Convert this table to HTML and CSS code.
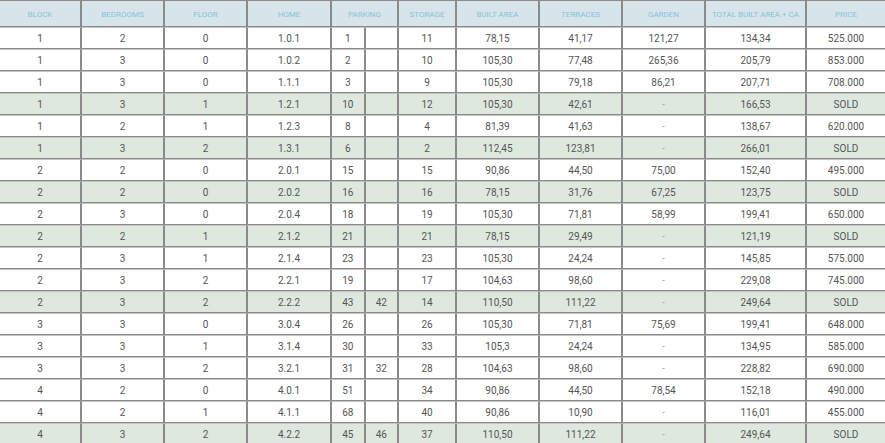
FILE: index.html
```html
<!DOCTYPE html>
<html>
<head>
<meta charset="utf-8">
<link rel="stylesheet" href="styles.css">
</head>
<body>
<table class="units">
<thead>
<tr>
<th class="c-block">BLOCK</th><th class="c-bed">BEDROOMS</th><th class="c-floor">FLOOR</th><th class="c-home">HOME</th><th class="c-park" colspan="2">PARKING</th><th class="c-stor">STORAGE</th><th class="c-built">BUILT AREA</th><th class="c-terr">TERRACES</th><th class="c-gard">GARDEN</th><th class="c-total">TOTAL BUILT AREA + CA</th><th class="c-price">PRICE</th>
</tr>
</thead>
<tbody>
<tr><td>1</td><td>2</td><td>0</td><td>1.0.1</td><td class="pa">1</td><td class="pb"></td><td>11</td><td>78,15</td><td>41,17</td><td>121,27</td><td>134,34</td><td>525.000</td></tr>
<tr><td>1</td><td>3</td><td>0</td><td>1.0.2</td><td class="pa">2</td><td class="pb"></td><td>10</td><td>105,30</td><td>77,48</td><td>265,36</td><td>205,79</td><td>853.000</td></tr>
<tr><td>1</td><td>3</td><td>0</td><td>1.1.1</td><td class="pa">3</td><td class="pb"></td><td>9</td><td>105,30</td><td>79,18</td><td>86,21</td><td>207,71</td><td>708.000</td></tr>
<tr class="sold"><td>1</td><td>3</td><td>1</td><td>1.2.1</td><td class="pa">10</td><td class="pb"></td><td>12</td><td>105,30</td><td>42,61</td><td class="dash">-</td><td>166,53</td><td>SOLD</td></tr>
<tr><td>1</td><td>2</td><td>1</td><td>1.2.3</td><td class="pa">8</td><td class="pb"></td><td>4</td><td>81,39</td><td>41,63</td><td class="dash">-</td><td>138,67</td><td>620.000</td></tr>
<tr class="sold"><td>1</td><td>3</td><td>2</td><td>1.3.1</td><td class="pa">6</td><td class="pb"></td><td>2</td><td>112,45</td><td>123,81</td><td class="dash">-</td><td>266,01</td><td>SOLD</td></tr>
<tr><td>2</td><td>2</td><td>0</td><td>2.0.1</td><td class="pa">15</td><td class="pb"></td><td>15</td><td>90,86</td><td>44,50</td><td>75,00</td><td>152,40</td><td>495.000</td></tr>
<tr class="sold"><td>2</td><td>2</td><td>0</td><td>2.0.2</td><td class="pa">16</td><td class="pb"></td><td>16</td><td>78,15</td><td>31,76</td><td>67,25</td><td>123,75</td><td>SOLD</td></tr>
<tr><td>2</td><td>3</td><td>0</td><td>2.0.4</td><td class="pa">18</td><td class="pb"></td><td>19</td><td>105,30</td><td>71,81</td><td>58,99</td><td>199,41</td><td>650.000</td></tr>
<tr class="sold"><td>2</td><td>2</td><td>1</td><td>2.1.2</td><td class="pa">21</td><td class="pb"></td><td>21</td><td>78,15</td><td>29,49</td><td class="dash">-</td><td>121,19</td><td>SOLD</td></tr>
<tr><td>2</td><td>3</td><td>1</td><td>2.1.4</td><td class="pa">23</td><td class="pb"></td><td>23</td><td>105,30</td><td>24,24</td><td class="dash">-</td><td>145,85</td><td>575.000</td></tr>
<tr><td>2</td><td>3</td><td>2</td><td>2.2.1</td><td class="pa">19</td><td class="pb"></td><td>17</td><td>104,63</td><td>98,60</td><td class="dash">-</td><td>229,08</td><td>745.000</td></tr>
<tr class="sold"><td>2</td><td>3</td><td>2</td><td>2.2.2</td><td class="pa">43</td><td class="pb">42</td><td>14</td><td>110,50</td><td>111,22</td><td class="dash">-</td><td>249,64</td><td>SOLD</td></tr>
<tr><td>3</td><td>3</td><td>0</td><td>3.0.4</td><td class="pa">26</td><td class="pb"></td><td>26</td><td>105,30</td><td>71,81</td><td>75,69</td><td>199,41</td><td>648.000</td></tr>
<tr><td>3</td><td>3</td><td>1</td><td>3.1.4</td><td class="pa">30</td><td class="pb"></td><td>33</td><td>105,3</td><td>24,24</td><td class="dash">-</td><td>134,95</td><td>585.000</td></tr>
<tr><td>3</td><td>3</td><td>2</td><td>3.2.1</td><td class="pa">31</td><td class="pb">32</td><td>28</td><td>104,63</td><td>98,60</td><td class="dash">-</td><td>228,82</td><td>690.000</td></tr>
<tr><td>4</td><td>2</td><td>0</td><td>4.0.1</td><td class="pa">51</td><td class="pb"></td><td>34</td><td>90,86</td><td>44,50</td><td>78,54</td><td>152,18</td><td>490.000</td></tr>
<tr><td>4</td><td>2</td><td>1</td><td>4.1.1</td><td class="pa">68</td><td class="pb"></td><td>40</td><td>90,86</td><td>10,90</td><td class="dash">-</td><td>116,01</td><td>455.000</td></tr>
<tr class="sold"><td>4</td><td>3</td><td>2</td><td>4.2.2</td><td class="pa">45</td><td class="pb">46</td><td>37</td><td>110,50</td><td>111,22</td><td class="dash">-</td><td>249,64</td><td>SOLD</td></tr>
</tbody>
</table>
</body>
</html>
```
FILE: styles.css
```css
html, body {
  margin: 0;
  padding: 0;
  background: #ffffff;
  overflow: hidden;
}
body {
  font-family: Roboto, "Liberation Sans", sans-serif;
}
.units {
  border-collapse: separate;
  border-spacing: 0;
  table-layout: fixed;
  width: 887px;
  margin-left: -1px;
}
.units th, .units td {
  box-sizing: border-box;
  border: 1px solid #8a8a8a;
  text-align: center;
  padding: 0;
  white-space: nowrap;
  overflow: hidden;
}
.units th {
  height: 27px;
  padding-top: 1px;
  background: #d7e5eb;
  color: #84c3da;
  font-size: 8px;
  font-weight: 400;
  border-top-color: #8a8a8a;
}
.units td {
  height: 22px;
  font-size: 10px;
  color: #555555;
  background: #ffffff;
  border-top-color: #c4c4c4;
  border-bottom-color: #8a8a8a;
}
.units tr.sold td {
  background: #dee8df;
}
.units td.dash {
  color: #aaaaaa;
}
.c-block { width: 82px; }
.c-bed { width: 83px; }
.c-floor { width: 83px; }
.c-home { width: 84px; }
.c-park { width: 67px; }
.c-stor { width: 58px; }
.c-built { width: 83px; }
.c-terr { width: 83px; }
.c-gard { width: 83px; }
.c-total { width: 101px; }
.c-price { width: 80px; }
.units td.pa { width: 34px; }
.units td.pb { width: 33px; }
```
